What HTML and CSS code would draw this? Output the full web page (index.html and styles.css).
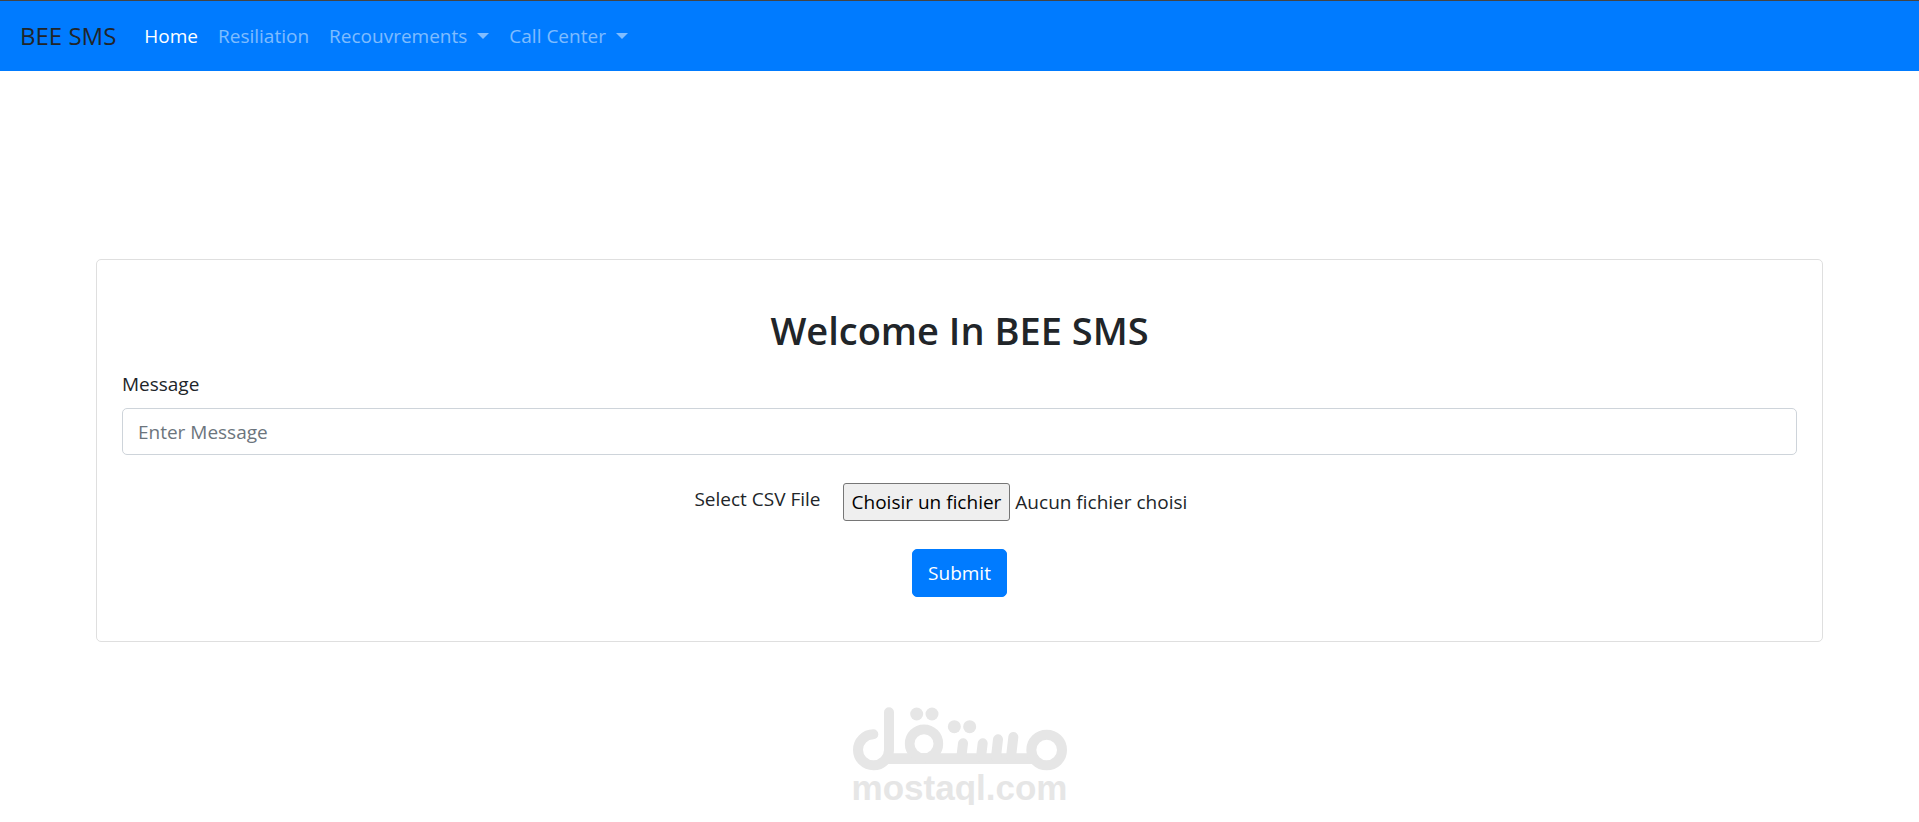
FILE: index.html
```html
<!DOCTYPE html>
<html lang="fr">
<head>
<meta charset="utf-8">
<meta name="viewport" content="width=device-width, initial-scale=1">
<title>BEE SMS</title>
<link rel="stylesheet" href="styles.css">
</head>
<body>
<nav class="navbar">
  <a class="brand" href="#">BEE SMS</a>
  <ul class="nav-list">
    <li><a class="nav-link active" href="#">Home</a></li>
    <li><a class="nav-link" href="#">Resiliation</a></li>
    <li><a class="nav-link dropdown" href="#">Recouvrements</a></li>
    <li><a class="nav-link dropdown" href="#">Call Center</a></li>
  </ul>
</nav>
<main class="page">
  <form class="card">
    <h1 class="title">Welcome In BEE SMS</h1>
    <label class="field-label" for="message">Message</label>
    <input class="field" id="message" type="text" placeholder="Enter Message">
    <div class="file-row">
      <label class="file-label" for="csv">Select CSV File</label>
      <div class="picker">
        <input class="file-input" id="csv" type="file" accept=".csv">
        <label class="file-button" for="csv">Choisir un fichier</label>
        <span class="file-name">Aucun fichier choisi</span>
      </div>
    </div>
    <button class="submit" type="submit">Submit</button>
  </form>
</main>
<footer class="watermark">
  <svg class="watermark-logo" viewBox="66 50 642 192" fill="none" stroke="currentColor" stroke-width="30" stroke-linecap="round" aria-hidden="true">
    <path d="M174 66V179A46.500 46.500 0 1 1 127 132"/>
    <path d="M160 205H610" stroke-width="32" stroke-linecap="butt"/>
    <circle cx="279" cy="160" r="43" stroke-width="29"/>
    <circle cx="647" cy="179" r="46"/>
    <path d="M396 159L391 200M455 159L450 200M501 147L495 200M547 140L540 200"/>
    <g fill="currentColor" stroke="none">
      <circle cx="257" cy="71" r="19.500"/><circle cx="303" cy="71" r="19.500"/>
      <circle cx="370" cy="109" r="19.500"/><circle cx="416" cy="109" r="19.500"/>
    </g>
  </svg>
  <span class="watermark-text">mostaql.com</span>
</footer>
</body>
</html>
```
FILE: styles.css
```css
* { box-sizing: border-box; }

body {
  margin: 0;
  background: #fff;
  color: #212529;
  font-family: "Open Sans", "Noto Sans", sans-serif;
  font-size: 19px;
  line-height: 30px;
}

.navbar {
  display: flex;
  align-items: center;
  gap: 18px;
  padding: 10px 20px;
  border-top: 1px solid #444;
  background: #007bff;
}

.brand {
  color: #212529;
  font-size: 24px;
  line-height: 38px;
  text-decoration: none;
}

.nav-list {
  display: flex;
  margin: 0;
  padding: 0;
  list-style: none;
}

.nav-link {
  display: flex;
  align-items: center;
  gap: 10px;
  padding: 10px;
  color: rgba(255, 255, 255, 0.5);
  text-decoration: none;
}

.nav-link.active { color: #fff; }

.dropdown::after {
  content: "";
  border: 6px solid transparent;
  border-top-color: currentColor;
  border-bottom: 0;
}

.page { padding: 188px 5% 0; }

.card {
  display: flex;
  flex-direction: column;
  padding: 46px 25px 44px;
  border: 1px solid #dfdfdf;
  border-radius: 5px;
}

.title {
  margin: 0 0 15px;
  font-size: 38px;
  font-weight: 600;
  line-height: 48px;
  text-align: center;
}

.field-label { margin-bottom: 9px; }

.field {
  width: 100%;
  height: 47px;
  padding: 8px 15px;
  border: 1px solid #ced4da;
  border-radius: 5px;
  color: #495057;
  font: inherit;
}

.field::placeholder { color: #6c757d; opacity: 1; }

.file-row {
  display: flex;
  justify-content: center;
  align-items: flex-start;
  gap: 22px;
  margin: 28px 0;
}

.file-label { padding-top: 1px; }

.picker {
  position: relative;
  display: flex;
  align-items: center;
  gap: 5px;
  min-width: 382px;
}

.file-input {
  position: absolute;
  width: 1px;
  height: 1px;
  opacity: 0;
}

.file-button {
  padding: 3px 8px;
  border: 1px solid #767676;
  border-radius: 3px;
  background: #efefef;
  color: #000;
}

.submit {
  align-self: center;
  padding: 8px 15px;
  border: 1px solid #007bff;
  border-radius: 5px;
  background: #007bff;
  color: #fff;
  font: inherit;
}

.watermark {
  display: flex;
  flex-direction: column;
  align-items: center;
  margin-top: 65px;
  color: #e6e6e6;
}

.watermark-logo { width: 214px; height: 64px; }

.watermark-text {
  font-family: "Liberation Sans", Arial, sans-serif;
  font-size: 35px;
  font-weight: 700;
  line-height: 34px;
}
```
